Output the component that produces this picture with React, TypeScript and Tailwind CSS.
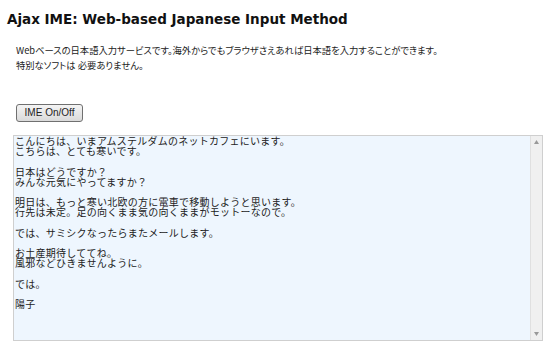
const lines = [
  "こんにちは、いまアムステルダムのネットカフェにいます。",
  "こちらは、とても寒いです。",
  "",
  "日本はどうですか？",
  "みんな元気にやってますか？",
  "",
  "明日は、もっと寒い北欧の方に電車で移動しようと思います。",
  "行先は未定。足の向くまま気の向くままがモットーなので。",
  "",
  "では、サミシクなったらまたメールします。",
  "",
  "お土産期待しててね。",
  "風邪などひきませんように。",
  "",
  "では。",
  "",
  "陽子",
]

export default function App() {
  return (
    <div className="w-[550px] h-[355px] bg-white overflow-hidden font-['Noto_Sans_CJK_JP',sans-serif] text-black">
      <h1 className="ml-[7px] pt-[10px] text-[13.5px] leading-[18px] font-bold font-['DejaVu_Sans',sans-serif] text-[#111]">
        Ajax IME: Web-based Japanese Input Method
      </h1>

      <div className="ml-[16px] mt-[15px] text-[9.3px] leading-[15px] text-[#222] [font-feature-settings:'palt']">
        <p>Webベースの日本語入力サービスです。海外からでもブラウザさえあれば日本語を入力することができます。</p>
        <p>特別なソフトは 必要ありません。</p>
      </div>

      <button className="ml-[16px] mt-[31px] w-[67px] h-[18px] rounded-[3px] border border-[#707070] bg-gradient-to-b from-[#f4f4f4] to-[#dadada] text-[10px] leading-none font-['Liberation_Sans',sans-serif] text-[#222] flex items-center justify-center">
        IME On/Off
      </button>

      <div className="ml-[13px] mt-[13px] w-[530px] h-[206px] border border-[#cfcfcf] bg-[#eef6fe] flex">
        <div className="flex-1 pl-[1px] pt-0 text-[10px] tracking-[0.25px] leading-[10.2px] text-[#222] whitespace-pre font-['Noto_Sans_CJK_JP',sans-serif]">
          {lines.map((l, i) => (
            <div key={i} className="h-[10.2px]">{l}</div>
          ))}
        </div>
        <div className="w-[12px] bg-[#f0f0f0] border-l border-[#e0e0e0] flex flex-col justify-between items-center py-[4px]">
          <svg width="5" height="4" viewBox="0 0 5 4"><path d="M2.5 0 L5 4 L0 4 Z" fill="#999" /></svg>
          <svg width="5" height="4" viewBox="0 0 5 4"><path d="M0 0 L5 0 L2.5 4 Z" fill="#999" /></svg>
        </div>
      </div>
    </div>
  )
}
